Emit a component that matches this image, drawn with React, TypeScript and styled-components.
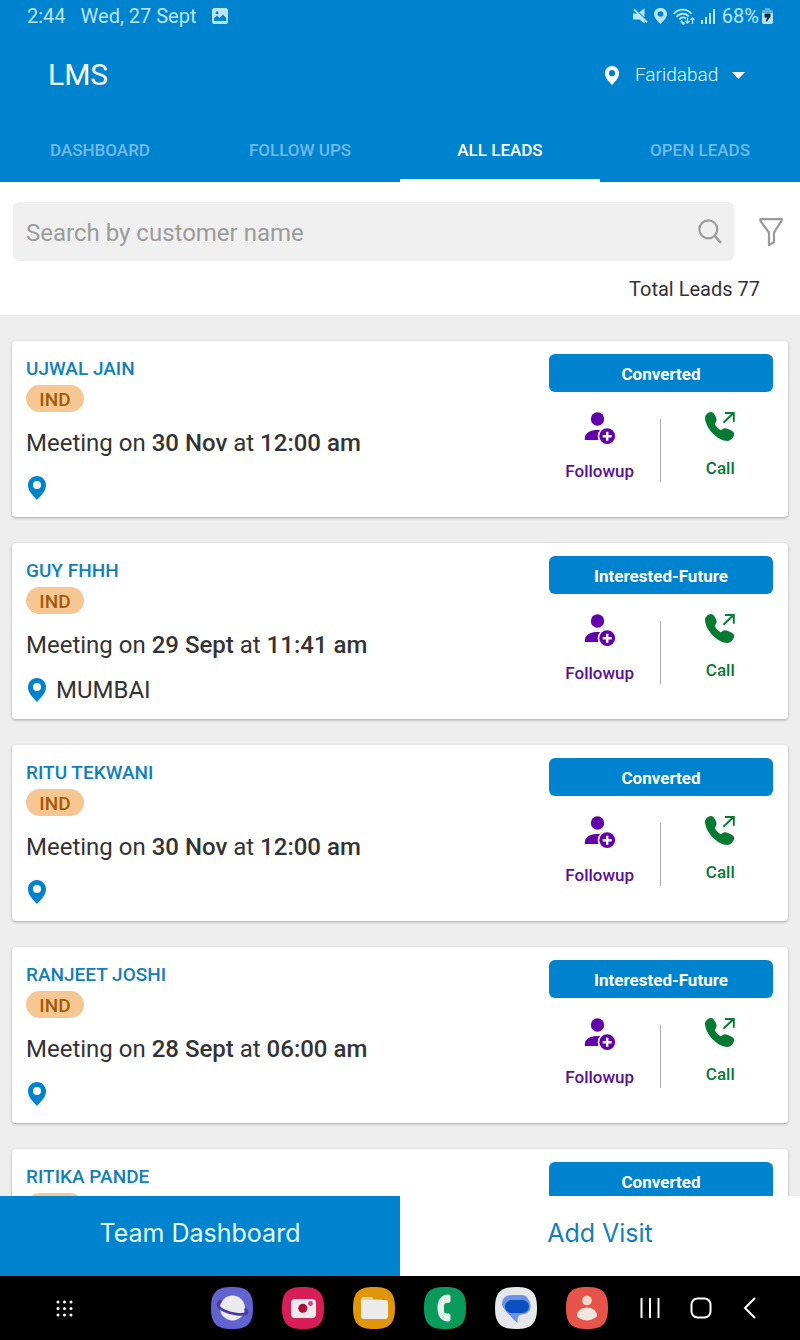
import React from "react";
import styled, { createGlobalStyle } from "styled-components";

const color = {
  brand: "#0083cf",
  name: "#127fbb",
  text: "#333333",
  muted: "#9b9b9b",
  status: "#b9e6fb",
  purple: "#6200aa",
  followText: "#581095",
  green: "#067a32",
  page: "#eeeeee",
};

const GlobalStyle = createGlobalStyle`
  * { box-sizing: border-box; }
  body { margin: 0; font-family: Roboto, "Liberation Sans", sans-serif; color: ${color.text}; }
  button, input, select { font: inherit; color: inherit; border: 0; margin: 0; padding: 0; background: none; }
  h1, h2, p, ul { margin: 0; padding: 0; }
  svg { display: block; flex: none; }
`;

const Screen = styled.div`
  display: flex;
  flex-direction: column;
  height: 100vh;
  background: ${color.page};
`;

const Header = styled.header`
  flex: none;
  background: ${color.brand};
  color: #fff;
`;

const StatusBar = styled.div`
  display: flex;
  align-items: center;
  justify-content: space-between;
  height: 32px;
  padding: 0 27px;
  font-size: 20px;
  color: ${color.status};
`;

const StatusGroup = styled.div<{ $gap: number }>`
  display: flex;
  align-items: center;
  gap: ${(p) => p.$gap}px;
`;

const TitleRow = styled.div`
  display: flex;
  align-items: center;
  justify-content: space-between;
  height: 86px;
  padding: 0 55px 0 48px;
`;

const Title = styled.h1`
  font-size: 30px;
  font-weight: 400;
  line-height: 36px;
`;

const CityPicker = styled.label`
  display: flex;
  align-items: center;
`;

const CitySelect = styled.select`
  appearance: none;
  margin: 0 13px 0 16px;
  font-size: 19px;
  font-weight: 300;
  line-height: 24px;
  color: #e2f8ff;
`;

const Tabs = styled.nav`
  display: grid;
  grid-template-columns: repeat(4, 1fr);
  height: 64px;
`;

const Tab = styled.button<{ $active?: boolean }>`
  border-top: 3px solid transparent;
  border-bottom: 3px solid ${(p) => (p.$active ? "#fff" : "transparent")};
  font-size: 17px;
  font-weight: 500;
  text-transform: uppercase;
  color: ${(p) => (p.$active ? "#fff" : "#6fbbe8")};
`;

const SearchPanel = styled.section`
  flex: none;
  padding: 20px 17px 12px 13px;
  background: #fff;
`;

const SearchRow = styled.div`
  display: flex;
  align-items: center;
  gap: 25px;
`;

const SearchBox = styled.label`
  display: flex;
  flex: 1;
  align-items: center;
  height: 59px;
  padding: 0 12px 0 13px;
  border-radius: 6px;
  background: #f0f0f0;
`;

const SearchInput = styled.input`
  flex: 1;
  min-width: 0;
  height: 100%;
  padding-top: 2px;
  font-size: 24px;
  outline: 0;
  &::placeholder { color: ${color.muted}; opacity: 1; }
`;

const Total = styled.p`
  padding: 14px 23px 0 0;
  font-size: 20px;
  line-height: 28px;
  text-align: right;
`;

const List = styled.ul`
  display: flex;
  flex: 1;
  flex-direction: column;
  gap: 26px;
  min-height: 0;
  overflow-y: auto;
  scrollbar-width: none;
  padding: 26px 12px;
  list-style: none;
`;

const Card = styled.li`
  display: flex;
  flex: none;
  justify-content: space-between;
  padding: 13px 15px 13px 14px;
  border-radius: 4px;
  background: #fff;
  box-shadow: 0 1px 3px rgba(0, 0, 0, 0.3);
`;

const Details = styled.div`
  flex: 1;
`;

const Name = styled.h2`
  font-size: 19px;
  font-weight: 500;
  line-height: 30px;
  color: ${color.name};
`;

const Tag = styled.span`
  display: flex;
  align-items: center;
  justify-content: center;
  width: 58px;
  height: 27px;
  margin-top: 1px;
  padding-top: 2px;
  border-radius: 14px;
  background: #f6c793;
  font-size: 19px;
  font-weight: 500;
  color: #a45a0b;
`;

const Meeting = styled.p`
  margin-top: 16px;
  font-size: 24px;
  line-height: 30px;
  b { font-weight: 500; }
`;

const Place = styled.p`
  display: flex;
  align-items: center;
  gap: 10px;
  height: 32px;
  margin-top: 14px;
  padding-left: 2px;
  font-size: 24px;
`;

const Side = styled.div`
  flex: none;
  width: 224px;
`;

const StatusButton = styled.button`
  display: block;
  width: 100%;
  height: 38px;
  padding-top: 2px;
  border-radius: 6px;
  background: ${color.brand};
  font-size: 17px;
  font-weight: 700;
  color: #fff;
`;

const Actions = styled.div`
  display: grid;
  grid-template-columns: 1fr 1px 1fr;
  margin: 20px -7px 0 -9px;
`;

const Action = styled.button<{ $tone: string }>`
  display: flex;
  flex-direction: column;
  align-items: center;
  gap: 16px;
  font-size: 17px;
  font-weight: 500;
  line-height: 20px;
  color: ${(p) => p.$tone};
`;

const Divider = styled.span`
  height: 63px;
  margin-top: 7px;
  background: #aaa;
`;

const Footer = styled.div`
  display: grid;
  flex: none;
  grid-template-columns: 1fr 1fr;
  height: 80px;
`;

const FooterButton = styled.button<{ $primary?: boolean }>`
  padding-bottom: 6px;
  background: ${(p) => (p.$primary ? color.brand : "#fff")};
  color: ${(p) => (p.$primary ? "#e6faff" : color.name)};
  font-family: Inter, "Liberation Sans", sans-serif;
  font-size: 25px;
`;

const SystemBar = styled.nav`
  display: flex;
  flex: none;
  align-items: center;
  height: 64px;
  padding: 0 42px 0 56px;
  background: #000;
`;

const Dock = styled.div`
  display: flex;
  gap: 29px;
  margin: 0 32px 0 auto;
`;

const SystemKeys = styled.div`
  display: flex;
  align-items: center;
  gap: 30px;
`;

const SystemButton = styled.button`
  display: block;
`;

const Pin = ({ width, height, fill }: { width: number; height: number; fill: string }) => (
  <svg width={width} height={height} viewBox="0 0 18 24" preserveAspectRatio="none" fill={fill} aria-hidden="true">
    <path
      fillRule="evenodd"
      d="M9 0C4 0 0 4 0 9c0 6 4.700 10.300 9 15 4.300-4.700 9-9 9-15 0-5-4-9-9-9zm0 5a4 4 0 1 1 0 8 4 4 0 0 1 0-8z"
    />
  </svg>
);

const PictureIcon = () => (
  <svg width="16" height="16" viewBox="0 0 16 16" aria-hidden="true">
    <rect width="16" height="16" rx="2.500" fill={color.status} />
    <circle cx="5" cy="4.800" r="1.500" fill={color.brand} />
    <path d="M2 13v-2.800L5 7.500 7.500 10 11 6.500l3.200 3.500v3z" fill={color.brand} />
  </svg>
);

const MuteIcon = () => (
  <svg width="15" height="16" viewBox="0 0 15 16" fill={color.status} aria-hidden="true">
    <path d="M0 5.500h4.500l7 6.500v3.500L6.500 11.500H0zM6.200 4.300l5.300-4v8.900zM1.600.8l13.200 13-1.200 1.200L.4 2z" />
  </svg>
);

const WifiIcon = () => (
  <svg width="22" height="17" viewBox="0 0 22 17" fill="none" stroke={color.status} strokeWidth="1.800" aria-hidden="true">
    <path d="M.8 5.800C5.500.2 14 .2 18.500 5.800M3.500 8.800c3.500-4 9-4 12.300-.5M6.300 11.500c2-2.300 4.500-2.500 6.500-1" />
    <path d="M8 13l2.500 3 1-1.500" strokeWidth="2" />
    <path d="M14.500 9.500V15m-2-2 2 2 2-2M19.500 16v-6m-2 2 2-2 2 2" strokeWidth="1.300" />
  </svg>
);

const SignalIcon = () => (
  <svg width="15" height="16" viewBox="0 0 15 16" fill={color.status} aria-hidden="true">
    <path d="M0 12h2v4H0zM4 9h2v7H4zM8 5h2v11H8zM12 1h2v15h-2z" />
  </svg>
);

const BatteryIcon = () => (
  <svg width="11" height="16" viewBox="0 0 11 16" aria-hidden="true">
    <path d="M3 0h5v2h2q1 0 1 1v3H0V3q0-1 1-1h2z" fill="#5cb1df" />
    <path d="M0 5h11v9q0 2-2 2H2q-2 0-2-2z" fill={color.status} />
    <path d="M2.500 5.500h6v3L5 13.500H3.500l1.500-4H2.500z" fill="#0b2e40" />
  </svg>
);

const SearchIcon = () => (
  <svg width="24" height="25" viewBox="0 0 24 25" fill="none" stroke="#9c9c9c" strokeWidth="2.200" aria-hidden="true">
    <circle cx="10.300" cy="10.300" r="9" />
    <path d="M16.800 17 23 24" strokeWidth="2.600" />
  </svg>
);

const FilterIcon = () => (
  <svg width="24" height="28" viewBox="0 0 24 28" fill="none" stroke="#999" strokeWidth="2.200" strokeLinejoin="round" aria-hidden="true">
    <path d="M1.200 1.200h21.600q0 2-1.500 3.500L15 14.500v9.800L10 27V14.500L2.700 4.700Q1.200 3.200 1.200 1.200z" />
  </svg>
);

const FollowIcon = () => (
  <svg width="32" height="33" viewBox="0 0 32 33" fill={color.purple} aria-hidden="true">
    <circle cx="13.500" cy="7" r="6.700" />
    <path d="M.8 28v-1.500c0-5 4.700-8.300 11.200-8.500h5v10z" />
    <circle cx="23.200" cy="24.200" r="9.500" fill="#fff" />
    <circle cx="23.200" cy="24.200" r="7.900" />
    <path d="M23.200 19.700v9M18.700 24.200h9" stroke="#fff" strokeWidth="2.500" />
  </svg>
);

const CallIcon = () => (
  <svg width="30" height="30" viewBox="0 0 30 30" aria-hidden="true">
    <path
      d="M0 5.500C0 3 3.500 0 5.700 0 8 0 9.500 2 10.500 4.300c1 2 1.500 3.500.8 5L9.800 12c1 2.400 3.400 4.800 6 6.200l2.500-1.500c1.500-.8 3-.5 4.700.3 3 1.300 6.200 2.500 6.200 5 0 3-3.500 7-6.500 7C12.500 29 0 16 0 5.500z"
      fill={color.green}
    />
    <path d="M18.500 10.700 28.500 1M20 1h8.800v8.800" fill="none" stroke={color.green} strokeWidth="1.900" />
  </svg>
);

const Squircle = ({ fill, children }: { fill: string; children: React.ReactNode }) => (
  <svg width="42" height="42" viewBox="0 0 42 42" aria-hidden="true">
    <path d="M21 0C36.500 0 42 5.500 42 21S36.500 42 21 42 0 36.500 0 21 5.500 0 21 0z" fill={fill} />
    {children}
  </svg>
);

const dockApps = [
  {
    label: "Browser",
    icon: (
      <Squircle fill="#6262d0">
        <circle cx="21.500" cy="21" r="12.500" fill="#ebebee" />
        <path
          d="M9.500 14.500C5 17 7 21 14 24s17 4.500 21 2.500c1.500-1 1-2.500-.5-4"
          fill="none"
          stroke="#4b3a9c"
          strokeWidth="2.800"
          strokeLinecap="round"
        />
      </Squircle>
    ),
  },
  {
    label: "Camera",
    icon: (
      <Squircle fill="#d81e58">
        <rect x="9" y="12" width="25" height="19" rx="4" fill="#ebebeb" />
        <circle cx="20.800" cy="21.200" r="4.500" fill="#b00c40" />
        <circle cx="28.500" cy="16.500" r="2.400" fill="#c44670" />
      </Squircle>
    ),
  },
  {
    label: "Files",
    icon: (
      <Squircle fill="#e0960a">
        <path d="M8 20v-7q0-3 3-3h7q2 0 3 2.500h8V20z" fill="#f1d19a" />
        <path d="M11 31h21l-2 2.500H13z" fill="#ee8a1c" />
        <rect x="8" y="13" width="27" height="19" rx="3" fill="#ebebeb" />
      </Squircle>
    ),
  },
  {
    label: "Phone",
    icon: (
      <Squircle fill="#0a9a5c">
        <path
          d="M26.500 9.500v4.500q0 2-2 2h-2q-2.500 0-2.500 2.500v5.500q0 2.500 2.500 2.500h2q2 0 2 2v4q0 2-2 2C17 34.500 13.500 29 13.500 21S17 7.500 24.500 7.500q2 0 2 2z"
          fill="#e3f1ea"
        />
      </Squircle>
    ),
  },
  {
    label: "Messages",
    icon: (
      <Squircle fill="#e6e7ea">
        <path
          d="M17 8h9q6 0 7.500 5 2 1.500 2 6c0 6-3.500 8-9 8.500-3 .5-4 2-4 8.500-4-3.500-7-7-9.500-9.500C9.500 23 7 19 7 17q0-9 10-9z"
          fill="#6a93e8"
        />
        <rect x="10" y="13" width="24" height="13" rx="6.500" fill="#0a50c0" />
      </Squircle>
    ),
  },
  {
    label: "Contacts",
    icon: (
      <Squircle fill="#e6544a">
        <circle cx="21" cy="13.500" r="4.800" fill="#f1d8cf" />
        <path d="M11 28c0-4 5-7.500 10-7.500S31 24 31 28q0 2-2 3-8 5-16 0-2-1-2-3z" fill="#f0e6df" />
      </Squircle>
    ),
  },
];

interface Lead {
  name: string;
  date: string;
  time: string;
  place?: string;
  status: string;
}

const leads: Lead[] = [
  { name: "UJWAL JAIN", date: "30 Nov", time: "12:00 am", status: "Converted" },
  { name: "GUY FHHH", date: "29 Sept", time: "11:41 am", place: "MUMBAI", status: "Interested-Future" },
  { name: "RITU TEKWANI", date: "30 Nov", time: "12:00 am", status: "Converted" },
  { name: "RANJEET JOSHI", date: "28 Sept", time: "06:00 am", status: "Interested-Future" },
  { name: "RITIKA PANDE", date: "30 Nov", time: "12:00 am", status: "Converted" },
];

const tabs = ["Dashboard", "Follow ups", "All leads", "Open leads"];

const LeadCard = ({ lead }: { lead: Lead }) => (
  <Card>
    <Details>
      <Name>{lead.name}</Name>
      <Tag>IND</Tag>
      <Meeting>
        Meeting on <b>{lead.date}</b> at <b>{lead.time}</b>
      </Meeting>
      <Place>
        <Pin width={18} height={24} fill={color.brand} />
        {lead.place}
      </Place>
    </Details>
    <Side>
      <StatusButton>{lead.status}</StatusButton>
      <Actions>
        <Action $tone={color.followText}>
          <FollowIcon />
          Followup
        </Action>
        <Divider />
        <Action $tone={color.green}>
          <CallIcon />
          Call
        </Action>
      </Actions>
    </Side>
  </Card>
);

export default function App() {
  return (
    <Screen>
      <GlobalStyle />
      <Header>
        <StatusBar>
          <StatusGroup $gap={15}>
            <span>2:44</span>
            <span>Wed, 27 Sept</span>
            <PictureIcon />
          </StatusGroup>
          <StatusGroup $gap={6}>
            <MuteIcon />
            <Pin width={13} height={16} fill={color.status} />
            <WifiIcon />
            <SignalIcon />
            <StatusGroup $gap={3}>
              <span>68%</span>
              <BatteryIcon />
            </StatusGroup>
          </StatusGroup>
        </StatusBar>
        <TitleRow>
          <Title>LMS</Title>
          <CityPicker>
            <Pin width={14} height={19} fill="#fff" />
            <CitySelect aria-label="City">
              <option>Faridabad</option>
            </CitySelect>
            <svg width="13" height="7" viewBox="0 0 13 7" fill="#fff" aria-hidden="true">
              <path d="M0 0h13L6.500 7z" />
            </svg>
          </CityPicker>
        </TitleRow>
        <Tabs>
          {tabs.map((tab) => (
            <Tab key={tab} $active={tab === "All leads"}>
              {tab}
            </Tab>
          ))}
        </Tabs>
      </Header>
      <SearchPanel>
        <SearchRow>
          <SearchBox>
            <SearchInput type="text" placeholder="Search by customer name" aria-label="Search by customer name" />
            <SearchIcon />
          </SearchBox>
          <SystemButton aria-label="Filter">
            <FilterIcon />
          </SystemButton>
        </SearchRow>
        <Total>Total Leads 77</Total>
      </SearchPanel>
      <List>
        {leads.map((lead) => (
          <LeadCard key={lead.name} lead={lead} />
        ))}
      </List>
      <Footer>
        <FooterButton $primary>Team Dashboard</FooterButton>
        <FooterButton>Add Visit</FooterButton>
      </Footer>
      <SystemBar>
        <SystemButton aria-label="All apps">
          <svg width="17" height="17" viewBox="0 0 17 17" fill="#fff" aria-hidden="true">
            {[2, 8.5, 15].map((y) => [2, 8.5, 15].map((x) => <circle key={`${x}-${y}`} cx={x} cy={y} r="1.500" />))}
          </svg>
        </SystemButton>
        <Dock>
          {dockApps.map((app) => (
            <SystemButton key={app.label} aria-label={app.label}>
              {app.icon}
            </SystemButton>
          ))}
        </Dock>
        <SystemKeys>
          <SystemButton aria-label="Recents">
            <svg width="20" height="20" viewBox="0 0 20 20" stroke="#fff" strokeWidth="2" aria-hidden="true">
              <path d="M1.500 0v20M10 0v20M18.500 0v20" />
            </svg>
          </SystemButton>
          <SystemButton aria-label="Home">
            <svg width="22" height="22" viewBox="0 0 22 22" fill="none" stroke="#fff" strokeWidth="2" aria-hidden="true">
              <rect x="1.500" y="1.500" width="19" height="19" rx="6" />
            </svg>
          </SystemButton>
          <SystemButton aria-label="Back">
            <svg width="16" height="22" viewBox="0 0 16 22" fill="none" stroke="#fff" strokeWidth="2" aria-hidden="true">
              <path d="M13 1 3 11l10 10" />
            </svg>
          </SystemButton>
        </SystemKeys>
      </SystemBar>
    </Screen>
  );
}
